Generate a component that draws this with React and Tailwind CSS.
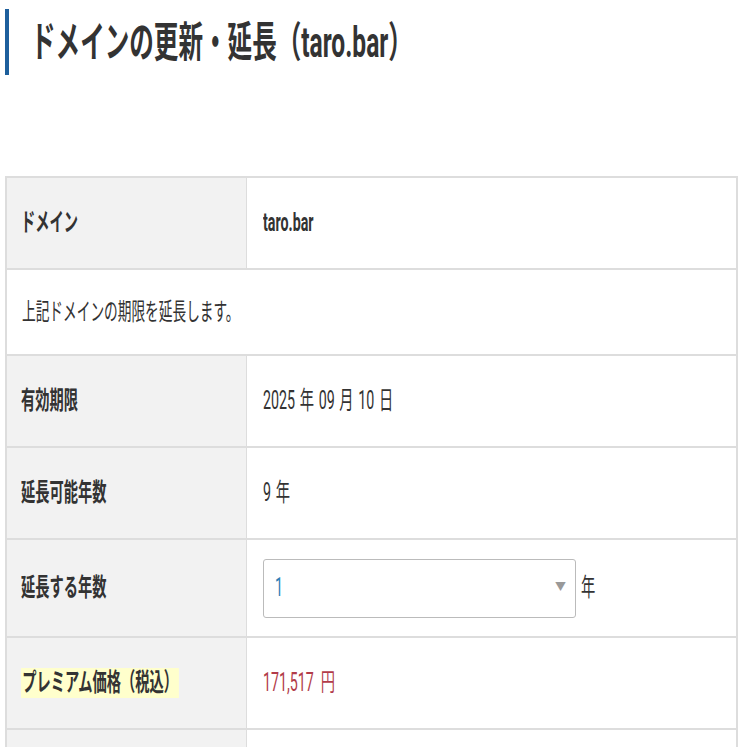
import React from 'react'

const font = { fontFamily: 'Roboto, "Noto Sans CJK JP", "Noto Sans", sans-serif' }

// narrow text, the reference is drawn condensed
const N = ({ children, className = '', scale = 'scale-x-[0.57]' }) => (
  <span className={`inline-block origin-left whitespace-nowrap ${scale} ${className}`}>{children}</span>
)

const Row = ({ label, children, h, highlight }) => (
  <div className={`grid grid-cols-[240px_1fr] border-t-2 border-[#ddd] ${h}`}>
    <div className="flex items-center bg-[#f2f2f2] border-r border-[#ddd] pl-[14px]">
      {highlight ? (
        <N className="bg-[#ffffcc] px-[2px] font-bold text-[25px] leading-[30px] text-[#333]">{label}</N>
      ) : (
        <N className="font-bold text-[25px] text-[#333]">{label}</N>
      )}
    </div>
    <div className="flex items-center pl-4">{children}</div>
  </div>
)

const App = () => {
  return (
    <div className="bg-white min-h-[747px] pt-[9px] overflow-hidden" style={font}>

      {/* Title */}
      <div className="ml-[5px] h-[66px] border-l-4 border-[#1d5f9c] flex items-center pl-[22px]">
        <N scale="scale-x-[0.585]" className="text-[42px] font-bold text-[#333]">ドメインの更新・延長（taro.bar）</N>
      </div>

      {/* Table */}
      <div className="ml-[5px] mt-[101px] w-[733px] border-x-2 border-[#ddd]">
        <Row label="ドメイン" h="h-[92px]">
          <N className="font-bold text-[25px] text-[#333]">taro.bar</N>
        </Row>

        <div className="h-[86px] border-t-2 border-[#ddd] flex items-center pl-[15px]">
          <N className="text-[24px] text-[#333]">上記ドメインの期限を延長します。</N>
        </div>

        <Row label="有効期限" h="h-[92px]">
          <N className="text-[25px] text-[#333] [word-spacing:2px]">2025 年 09 月 10 日</N>
        </Row>

        <Row label="延長可能年数" h="h-[92px]">
          <N className="text-[25px] text-[#333] [word-spacing:2px]">9 年</N>
        </Row>

        <Row label="延長する年数" h="h-[98px]">
          <div className="flex items-center gap-[5px]">
            <div className="w-[313px] h-[59px] border border-[#bbb] rounded-[3px] flex items-center justify-between pl-[11px] pr-[9px]">
              <N className="text-[25px] text-[#2f80b5]">1</N>
              <span className="text-[11px] text-[#999]">▼</span>
            </div>
            <N className="text-[25px] text-[#333]">年</N>
          </div>
        </Row>

        <Row label="プレミアム価格（税込）" h="h-[92px]" highlight>
          <N className="text-[25px] text-[#b23c4a] [word-spacing:6px]">171,517 円</N>
        </Row>

        <Row label="" h="h-[92px]">
          <span />
        </Row>
      </div>

    </div>
  )
}

export default App
